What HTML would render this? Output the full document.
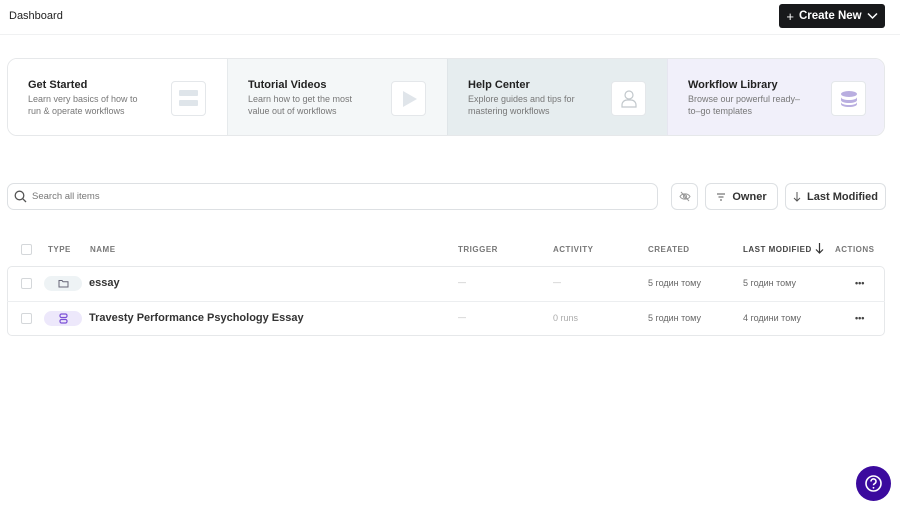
<!DOCTYPE html><html><head><style>
*{box-sizing:border-box;margin:0;padding:0}
body{width:900px;height:507px;background:#fff;font-family:"Liberation Sans","Noto Sans CJK SC",sans-serif;position:relative;overflow:hidden;color:#222}
.a{position:absolute}
.card{position:absolute;top:58px;height:78px;width:220px}
.card h3{position:absolute;left:20px;top:20px;font-size:11px;font-weight:bold;color:#222}
.card p{position:absolute;left:20px;top:35px;font-size:9px;line-height:11.5px;color:#777;width:118px}
.ib{position:absolute;left:163px;top:22px;width:35px;height:35px;background:#fff;border:1px solid #e4e7ea;border-radius:4px}
.btn{position:absolute;top:183px;height:27px;border:1px solid #dde0e3;border-radius:6px;background:#fff;font-size:11px;font-weight:bold;color:#333;display:flex;align-items:center;justify-content:center;gap:6px}
.th{position:absolute;top:245px;font-size:8px;font-weight:bold;letter-spacing:.5px;color:#777}
.cb{position:absolute;width:11px;height:11px;border:1px solid #d4d7da;border-radius:2px;left:21px}
.t{position:absolute;font-size:9px;color:#666}
.dash{position:absolute;font-size:8px;color:#bbb}
.dots{position:absolute;font-size:9px;font-weight:bold;color:#444;letter-spacing:0}
</style></head><body>
<div class="a" style="left:9px;top:10px;font-size:11px;color:#222">Dashboard</div>
<div class="a" style="left:0;top:34px;width:900px;height:1px;background:#f0f1f2"></div>
<div class="a" style="left:779px;top:4px;width:106px;height:24px;background:#18191b;border-radius:3px;color:#fff;font-size:11.5px;font-weight:bold;display:flex;align-items:center;justify-content:center;gap:5px"><span style="font-weight:normal;font-size:13px">+</span>Create New<svg width="11" height="8" viewBox="0 0 11 8"><path d="M1 1.5l4.5 4.5 4.5-4.5" stroke="#fff" stroke-width="1.5" fill="none"/></svg></div>

<div class="a" style="left:7px;top:58px;width:878px;height:78px;border:1px solid #e6e8ea;border-radius:10px;overflow:hidden">
<div class="card" style="left:0;top:0;background:#fff"><h3>Get Started</h3><p>Learn very basics of how to run &amp; operate workflows</p><div class="ib"><div class="a" style="left:7px;top:8px;width:19px;height:6px;background:#dfe5ea;border-radius:1px"></div><div class="a" style="left:7px;top:18px;width:19px;height:6px;background:#dfe5ea;border-radius:1px"></div></div></div>
<div class="card" style="left:219px;top:0;background:#f4f7f8;border-left:1px solid #e6eaec"><h3>Tutorial Videos</h3><p>Learn how to get the most value out of workflows</p><div class="ib"><svg class="a" style="left:9px;top:8px" width="17" height="18"><path d="M2 1L16 9 2 17z" fill="#e0e5ea"/></svg></div></div>
<div class="card" style="left:439px;top:0;background:#e6edef;border-left:1px solid #dfe5e8"><h3>Help Center</h3><p>Explore guides and tips for mastering workflows</p><div class="ib"><svg class="a" style="left:8px;top:7px" width="18" height="20"><circle cx="9" cy="6" r="4" fill="none" stroke="#c2c8cc" stroke-width="1.2"/><path d="M2 18v-2a5 5 0 0 1 5-5h4a5 5 0 0 1 5 5v2z" fill="none" stroke="#c2c8cc" stroke-width="1.2"/></svg></div></div>
<div class="card" style="left:659px;top:0;width:220px;background:#f1f0fa;border-left:1px solid #e6e6f0"><h3>Workflow Library</h3><p>Browse our powerful ready–to–go templates</p><div class="ib"><svg class="a" style="left:8px;top:8px" width="18" height="18"><ellipse cx="9" cy="4" rx="8" ry="3" fill="#b9aee0"/><path d="M1 7c0 2 4 3 8 3s8-1 8-3v3c0 2-4 3-8 3s-8-1-8-3z" fill="#b9aee0"/><path d="M1 12c0 2 4 3 8 3s8-1 8-3v2c0 2-4 3-8 3s-8-1-8-3z" fill="#b9aee0"/></svg></div></div>
</div>

<div class="a" style="left:7px;top:183px;width:651px;height:27px;border:1px solid #dde0e3;border-radius:7px"></div>
<svg class="a" style="left:14px;top:190px" width="13" height="13"><circle cx="5.5" cy="5.5" r="4.3" fill="none" stroke="#555" stroke-width="1.3"/><path d="M8.6 8.6l3.4 3.4" stroke="#555" stroke-width="1.3"/></svg>
<div class="a" style="left:32px;top:191px;font-size:9.5px;color:#777">Search all items</div>
<div class="btn" style="left:671px;width:27px"><svg width="12" height="11"><path d="M1 5.5C3 2 9 2 11 5.5 9 9 3 9 1 5.5z" fill="none" stroke="#999" stroke-width="1"/><circle cx="6" cy="5.5" r="1.6" fill="none" stroke="#999"/><path d="M2 1l8 9" stroke="#999"/></svg></div>
<div class="btn" style="left:705px;width:73px"><svg width="10" height="8"><path d="M1 1h8M2.5 4h5M4 7h2" stroke="#555" stroke-width="1"/></svg>Owner</div>
<div class="btn" style="left:785px;width:101px"><svg width="8" height="10"><path d="M4 0v9M1 6l3 3 3-3" stroke="#555" stroke-width="1" fill="none"/></svg>Last Modified</div>

<div class="cb" style="top:244px"></div>
<div class="th" style="left:48px">TYPE</div><div class="th" style="left:90px">NAME</div>
<div class="th" style="left:458px">TRIGGER</div><div class="th" style="left:553px">ACTIVITY</div>
<div class="th" style="left:648px">CREATED</div><div class="th" style="left:743px;color:#444">LAST MODIFIED</div>
<svg class="a" style="left:815px;top:243px" width="9" height="11"><path d="M4.5 0v10M1 6.5l3.5 3.5 3.5-3.5" stroke="#333" stroke-width="1.2" fill="none"/></svg>
<div class="th" style="left:835px">ACTIONS</div>

<div class="a" style="left:7px;top:266px;width:878px;height:70px;border:1px solid #e6e8ea;border-radius:5px"></div>
<div class="a" style="left:7px;top:301px;width:878px;height:1px;background:#eceef0"></div>

<div class="cb" style="top:278px"></div>
<div class="a" style="left:44px;top:276px;width:38px;height:15px;border-radius:8px;background:#eef3f5"></div>
<svg class="a" style="left:58px;top:279px" width="11" height="9"><path d="M1 1.5h3l1 1.2h5v5.3H1z" fill="none" stroke="#667" stroke-width="1"/></svg>
<div class="a" style="left:89px;top:277px;font-size:11px;font-weight:bold;color:#333">essay</div>
<div class="dash" style="left:458px;top:278px">—</div><div class="dash" style="left:553px;top:278px">—</div>
<div class="t" style="left:648px;top:278px">5 годин тому</div><div class="t" style="left:743px;top:278px">5 годин тому</div>
<div class="dots" style="left:855px;top:278px">•••</div>

<div class="cb" style="top:313px"></div>
<div class="a" style="left:44px;top:311px;width:38px;height:15px;border-radius:8px;background:#ede8fb"></div>
<svg class="a" style="left:59px;top:313px" width="9" height="11"><rect x="1" y="1" width="7" height="3.5" rx="1.5" fill="none" stroke="#7b4fd6" stroke-width="1.2"/><rect x="1" y="6.5" width="7" height="3.5" rx="1.5" fill="none" stroke="#7b4fd6" stroke-width="1.2"/></svg>
<div class="a" style="left:89px;top:312px;font-size:11px;font-weight:bold;color:#333">Travesty Performance Psychology Essay</div>
<div class="dash" style="left:458px;top:313px">—</div><div class="t" style="left:553px;top:313px;color:#aaa">0 runs</div>
<div class="t" style="left:648px;top:313px">5 годин тому</div><div class="t" style="left:743px;top:313px">4 години тому</div>
<div class="dots" style="left:855px;top:313px">•••</div>

<div class="a" style="left:856px;top:466px;width:35px;height:35px;border-radius:50%;background:#3b0a9e"></div>
<svg class="a" style="left:864px;top:474px" width="19" height="19"><circle cx="9.5" cy="9.5" r="7.5" fill="none" stroke="#fff" stroke-width="1.6"/><path d="M7 7.5a2.5 2.5 0 1 1 3.5 2.2c-.7.4-1 .8-1 1.6" fill="none" stroke="#fff" stroke-width="1.6"/><circle cx="9.5" cy="13.8" r=".9" fill="#fff"/></svg>
</body></html>
